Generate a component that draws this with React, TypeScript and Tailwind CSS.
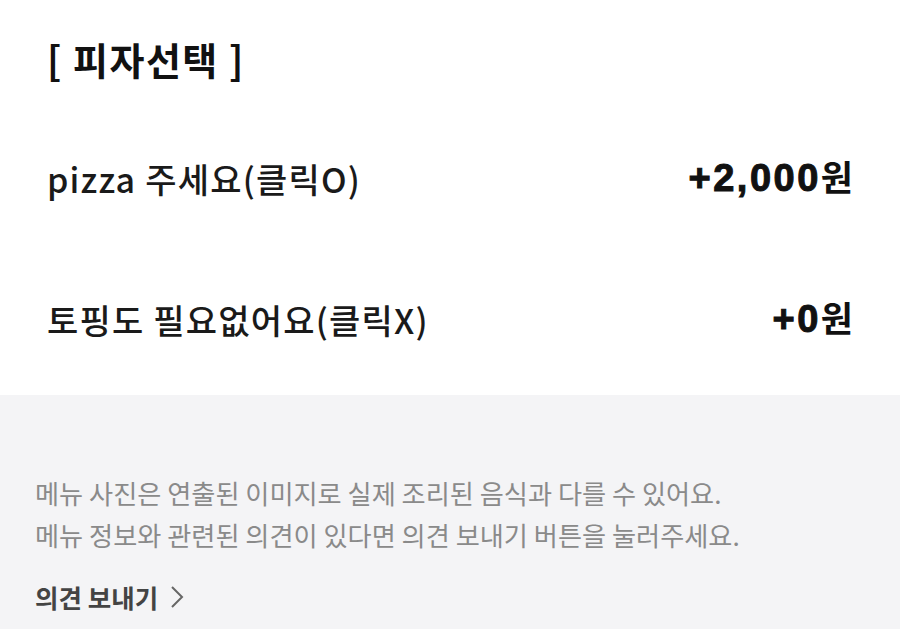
import React from 'react';

const font = { fontFamily: '"Noto Sans CJK KR", "Noto Sans", sans-serif' };
const digits = { fontFamily: '"Liberation Sans", Arial, sans-serif' };

const options = [
  { label: 'pizza 주세요(클릭O)', amount: '+2,000' },
  { label: '토핑도 필요없어요(클릭X)', amount: '+0' },
];

export default function App() {
  return (
    <div className="w-[900px] h-[629px] overflow-hidden bg-white" style={font}>
      {/* Option list */}
      <section className="h-[395px] px-[47px] pt-[32px]">
        <h2 className="text-[38px] font-bold text-[#111] leading-[54px] tracking-[1.5px]">[ 피자선택 ]</h2>
        <ul className="mt-[68px] flex flex-col gap-[93px]">
          {options.map((opt) => (
            <li key={opt.label} className="flex items-center justify-between h-[48px]">
              <span className="text-[34px] font-medium text-[#1a1a1a] tracking-[1.2px]">{opt.label}</span>
              <span className="flex items-baseline text-[#111]">
                <span className="text-[38px] font-bold tracking-[2.5px] [-webkit-text-stroke:1px_#111]" style={digits}>
                  {opt.amount}
                </span>
                <span className="text-[35px] font-bold">원</span>
              </span>
            </li>
          ))}
        </ul>
      </section>

      {/* Notice */}
      <section className="h-[234px] bg-[#f4f4f6] px-[35px] pt-[77px]">
        <p className="text-[26.2px] leading-[42px] text-[#8a8a8a]">
          메뉴 사진은 연출된 이미지로 실제 조리된 음식과 다를 수 있어요.
          <br />
          메뉴 정보와 관련된 의견이 있다면 의견 보내기 버튼을 눌러주세요.
        </p>
        <button className="mt-[22px] flex items-center gap-[12px] text-[25.5px] font-bold text-[#444]">
          의견 보내기
          <svg className="w-[14px] h-[24px]" viewBox="0 0 14 24" fill="none" stroke="#666" strokeWidth={2}>
            <path d="M2 2l10 10-10 10" />
          </svg>
        </button>
      </section>
    </div>
  );
}
